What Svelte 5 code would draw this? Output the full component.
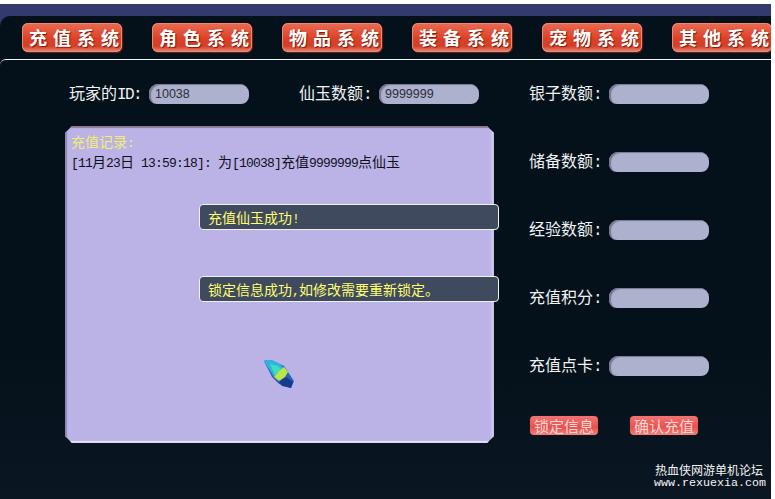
<script>
	const tabs = ['充值系统', '角色系统', '物品系统', '装备系统', '宠物系统', '其他系统'];
	const fields = ['银子数额', '储备数额', '经验数额', '充值积分', '充值点卡'];
</script>

<div class="frame">
	<div class="head">
		<nav class="nav">
			{#each tabs as tab}
				<button class="tab">{tab}</button>
			{/each}
		</nav>
	</div>

	<div class="content">
		<section class="left">
			<div class="top-row">
				<label class="field">
					<span class="label">玩家的<span class="lat">ID:</span></span>
					<input class="pill" readonly value="10038" />
				</label>
				<label class="field">
					<span class="label">仙玉数额<span class="lat">:</span></span>
					<input class="pill" readonly value="9999999" />
				</label>
			</div>

			<div class="panel">
				<div class="log-title">充值记录<span class="num">:</span></div>
				<div class="log-line"><span class="num">[11</span>月<span class="num">23</span>日<span class="num">{' 13:59:18]: '}</span>为<span class="num">[10038]</span>充值<span class="num">9999999</span>点仙玉</div>

				<div class="toast first">充值仙玉成功<span class="num">!</span></div>
				<div class="toast second">锁定信息成功<span class="num">,</span>如修改需要重新锁定。</div>

				<svg class="gem" width="30" height="28" viewBox="0 0 30 28" aria-hidden="true">
					<defs>
						<filter id="soft" x="-10%" y="-10%" width="120%" height="120%">
							<feGaussianBlur stdDeviation="0.5" />
						</filter>
					</defs>
					<g filter="url(#soft)">
						<polygon points="0,1 5,-1 20,6 30,21 27,28 15,24 8,17" fill="#2a62b8" />
						<polygon points="0,1 5,-1 16,4 20,8 15,12 10,17" fill="#2fb4dc" />
						<polygon points="6,4 14,6 17,9 11,15" fill="#3be0c0" />
						<polygon points="10,17 15,11 20,7 24,12 21,17 15,21" fill="#bce548" />
						<polygon points="15,22 22,17 29,22 27,28 18,26" fill="#163a8e" />
					</g>
				</svg>
			</div>
		</section>

		<aside class="right">
			{#each fields as name}
				<label class="field">
					<span class="label">{name}<span class="lat">:</span></span>
					<input class="pill" readonly />
				</label>
			{/each}
			<div class="actions">
				<button class="action">锁定信息</button>
				<button class="action">确认充值</button>
			</div>
		</aside>
	</div>

	<div class="mark">
		<div class="mark-name">热血侠网游单机论坛</div>
		<div class="mark-url">www.rexuexia.com</div>
	</div>
</div>

<style>
:global(body) {
	margin: 0;
	background: #fff;
}
.frame {
	position: relative;
	width: 771px;
	height: 495px;
	margin-top: 4px;
	overflow: hidden;
	background: linear-gradient(#04111b 70%, #0a1722);
	font-family: "Noto Sans CJK SC", sans-serif;
	color: #f2f2f2;
}
.head {
	padding-top: 12px;
	background: #333a6e;
}
.nav {
	display: flex;
	gap: 30px;
	box-sizing: border-box;
	height: 43px;
	padding: 7px 0 0 22px;
	background: #04111b;
	border-top-left-radius: 10px;
}
.tab {
	flex: none;
	width: 100px;
	height: 29px;
	padding: 0 0 0 7px;
	border: none;
	border-radius: 6px;
	background: linear-gradient(#ea6c54, #dc4026 55%, #d2402a 80%, #ec8c78);
	box-shadow: inset 0 0 0 1px #ee8a74, 1px 1px 1px #6b2418;
	color: #fff;
	font-family: inherit;
	font-size: 18px;
	font-weight: 700;
	line-height: 29px;
	letter-spacing: 6px;
	text-align: left;
	white-space: nowrap;
	text-shadow: 1px 1px 1px #7a1c0c;
}
.content {
	display: flex;
	border-top: 1px solid #f4f4f4;
	border-top-left-radius: 6px;
}
.left {
	box-sizing: border-box;
	width: 529px;
	padding: 23px 0 0 65px;
}
.top-row {
	display: flex;
	gap: 50px;
	padding-left: 4px;
	margin-bottom: 22px;
}
.field {
	display: flex;
	align-items: center;
	height: 21px;
}
.label {
	flex: none;
	width: 80px;
	font-size: 16px;
	line-height: 21px;
	white-space: nowrap;
}
.lat {
	font-family: "Liberation Mono", monospace;
	font-size: 16px;
	letter-spacing: -1.6px;
}
.pill {
	box-sizing: border-box;
	width: 100px;
	height: 20px;
	padding: 0 6px;
	border: none;
	border-radius: 9px 9px 8px 8px;
	outline: none;
	background: #aeb1cd;
	box-shadow: inset 2px 1px 1px #74778e;
	color: #2c2c3a;
	font-family: "Liberation Sans", sans-serif;
	font-size: 12.5px;
}
.panel {
	position: relative;
	box-sizing: border-box;
	width: 429px;
	height: 317px;
	padding: 6px;
}
.panel::before {
	content: "";
	position: absolute;
	inset: 0;
	background: #bbb3e5;
	box-shadow: inset 0 2px 1px #8a7b92, inset 2px 0 1px #9089b0, inset -3px 0 2px #cbc8ee, inset 0 -2px 1px #e8e6f8;
	clip-path: polygon(7px 0, calc(100% - 7px) 0, 100% 7px, 100% calc(100% - 7px), calc(100% - 7px) 100%, 7px 100%, 0 calc(100% - 7px), 0 7px);
}
.log-title,
.log-line {
	position: relative;
	font-size: 14px;
}
.log-title {
	color: #f2ee6e;
	line-height: 19px;
}
.log-line {
	color: #10101c;
	line-height: 16px;
	white-space: pre;
}
.num {
	font-family: "Liberation Mono", monospace;
	font-size: 13px;
	letter-spacing: -0.8px;
}
.toast {
	position: absolute;
	left: 134px;
	box-sizing: border-box;
	width: 300px;
	height: 26px;
	padding-left: 8px;
	border: 1px solid #f0f0f0;
	border-radius: 4px;
	background: #3f4a5e;
	color: #ffff6e;
	font-size: 14px;
	line-height: 24px;
	white-space: nowrap;
}
.first {
	top: 78px;
}
.second {
	top: 150px;
}
.gem {
	position: absolute;
	left: 199px;
	top: 234px;
}
.right {
	display: flex;
	flex-direction: column;
	gap: 47px;
	padding-top: 23px;
}
.actions {
	display: flex;
	gap: 32px;
	margin-top: -7px;
	padding-left: 1px;
}
.action {
	width: 68px;
	height: 19px;
	padding: 0;
	border: none;
	border-radius: 4px;
	background: linear-gradient(#f27472, #e8504f 60%, #f2827c);
	box-shadow: 0 0 1px #7c2a28;
	color: #f8d6d0;
	font-family: inherit;
	font-size: 15px;
	line-height: 19px;
	white-space: nowrap;
}
.mark {
	position: absolute;
	right: 5px;
	bottom: 10px;
	color: #f4f4f4;
	text-align: right;
}
.mark-name {
	font-size: 12px;
	line-height: 14px;
	padding-right: 3px;
}
.mark-url {
	font-family: "Liberation Mono", monospace;
	font-size: 11.67px;
	line-height: 12px;
}
</style>
